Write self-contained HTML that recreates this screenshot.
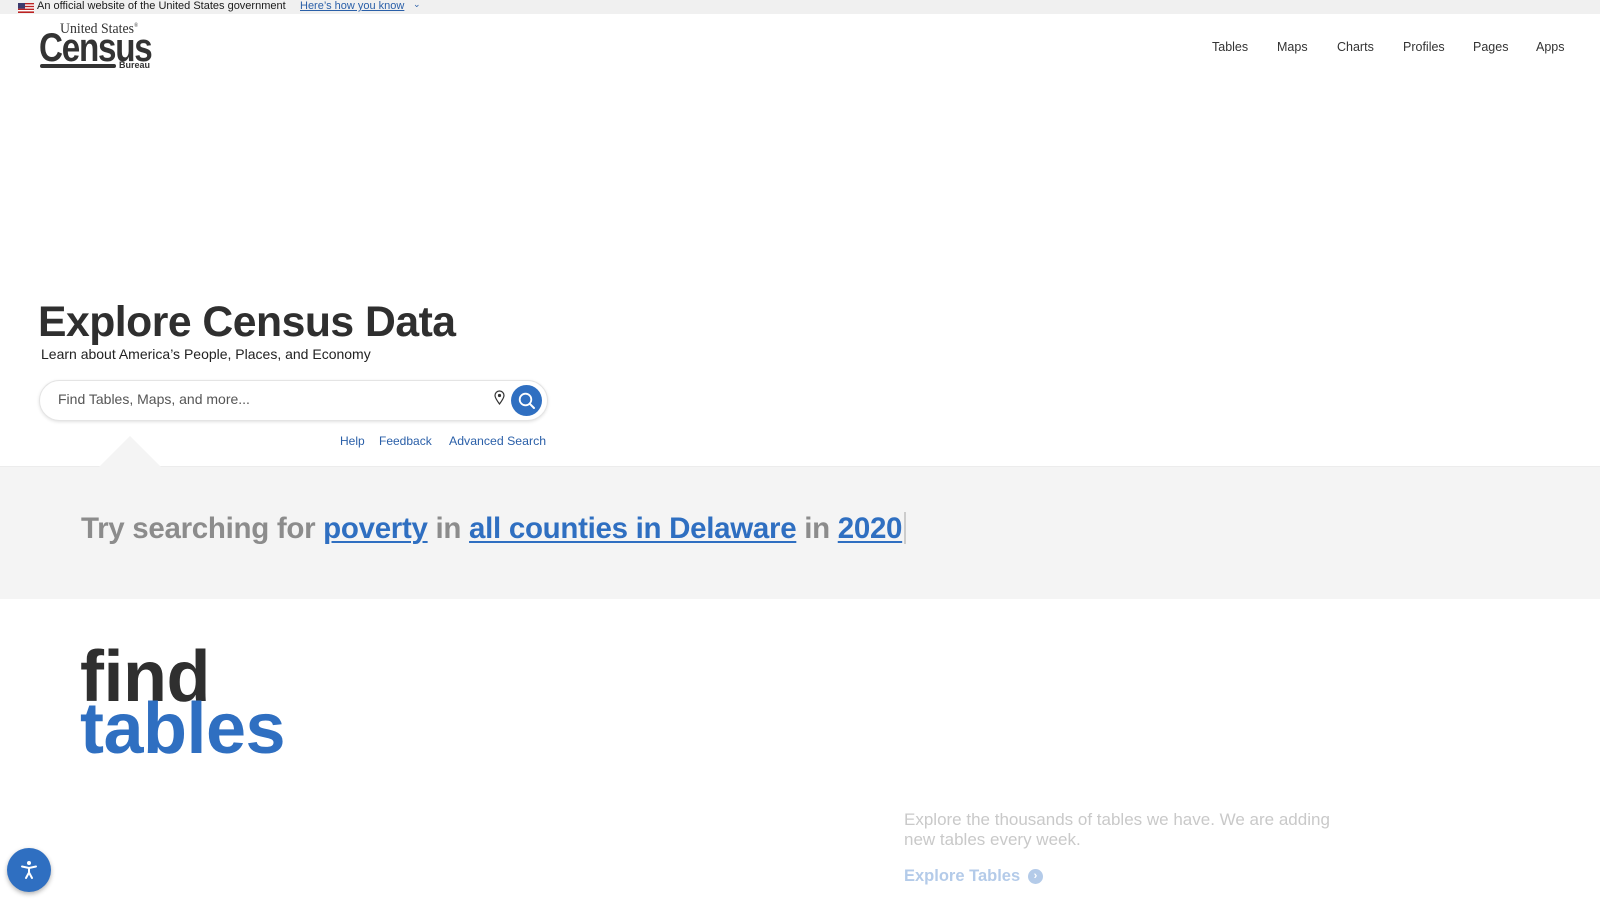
<!DOCTYPE html>
<html><head><meta charset="utf-8"><style>
*{margin:0;padding:0;box-sizing:border-box}
body{width:1600px;height:900px;overflow:hidden;background:#fff;font-family:"Liberation Sans",sans-serif;color:#333;position:relative}
.abs{position:absolute;white-space:nowrap}
.top{position:absolute;left:0;top:0;width:1600px;height:14px;background:#f0f0f0;font-size:11px;color:#1b1b1b}
.nav a{position:absolute;top:40px;font-size:12.5px;color:#333;text-decoration:none}
.band{position:absolute;left:0;top:466px;width:1600px;height:133px;background:#f4f4f4;border-top:1px solid #ececec}
.try{position:absolute;left:81px;top:512px;font-size:29.5px;font-weight:bold;color:#8c8c8c;letter-spacing:-0.3px}
.try u{color:#2f6fc1;text-decoration-thickness:2px;text-underline-offset:3px}
</style></head><body>
<div class="top"><svg class="abs" style="left:18px;top:3px" width="16" height="10"><rect width="16" height="10" fill="#b22"/><rect y="1.4" width="16" height="1.4" fill="#fff"/><rect y="4.2" width="16" height="1.4" fill="#fff"/><rect y="7" width="16" height="1.4" fill="#fff"/><rect width="7" height="5.6" fill="#3c3b6e"/></svg>
<span class="abs" style="left:37px;top:0">An official website of the United States government</span>
<span class="abs" style="left:300px;top:0;color:#2a5fa8;text-decoration:underline">Here’s how you know</span>
<span class="abs" style="left:413px;top:-1px;font-size:9px;color:#2a5fa8">⌄</span></div>

<div class="abs" style="left:60px;top:21px;font-family:'Liberation Serif',serif;font-size:15px;color:#333;transform:scaleX(0.92);transform-origin:left">United States<sup style="font-size:6px">®</sup></div>
<div class="abs" style="left:39px;top:28px;font-size:40px;font-weight:bold;color:#333;letter-spacing:-1.5px;line-height:40px;transform:scaleX(0.83);transform-origin:left">Census</div>
<div class="abs" style="left:40px;top:64px;width:76px;height:4px;background:#333;border-radius:2px"></div>
<div class="abs" style="left:119px;top:60px;font-size:9px;font-weight:bold;color:#333">Bureau</div>

<div class="nav"><a style="left:1212px">Tables</a><a style="left:1277px">Maps</a><a style="left:1337px">Charts</a><a style="left:1403px">Profiles</a><a style="left:1473px">Pages</a><a style="left:1536px">Apps</a></div>

<div class="abs" style="left:38px;top:298px;font-size:42.7px;font-weight:bold;color:#2f2f2f;letter-spacing:-0.5px">Explore Census Data</div>
<div class="abs" style="left:41px;top:346px;font-size:14px;color:#222">Learn about America’s People, Places, and Economy</div>

<div class="abs" style="left:39px;top:380px;width:509px;height:41px;border:1px solid #e4e4e4;border-radius:21px;box-shadow:0 1px 3px rgba(0,0,0,.12);background:#fff"></div>
<div class="abs" style="left:58px;top:391px;font-size:14px;color:#555">Find Tables, Maps, and more...</div>
<svg class="abs" style="left:494px;top:390px" width="11" height="15" viewBox="0 0 11 15"><path d="M5.5 14C2.5 10 1 7.5 1 5.5a4.5 4.5 0 0 1 9 0c0 2-1.5 4.5-4.5 8.5z" fill="none" stroke="#333" stroke-width="1.2"/><circle cx="5.5" cy="5.5" r="1.6" fill="#333"/></svg>
<div class="abs" style="left:511px;top:385px;width:31px;height:31px;border-radius:50%;background:#2f6fc1"></div>
<svg class="abs" style="left:517px;top:391px" width="20" height="20" viewBox="0 0 20 20"><circle cx="8.5" cy="8.5" r="5.8" fill="none" stroke="#fff" stroke-width="1.8"/><path d="M12.8 12.8L17 17" stroke="#fff" stroke-width="2" stroke-linecap="round"/></svg>
<div class="abs" style="left:340px;top:434px;font-size:12px;color:#2a5fa8">Help</div>
<div class="abs" style="left:379px;top:434px;font-size:12px;color:#2a5fa8">Feedback</div>
<div class="abs" style="left:449px;top:434px;font-size:12.3px;color:#2a5fa8">Advanced Search</div>

<div class="band"></div>
<div class="abs" style="left:99px;top:436px;width:0;height:0;border-left:31px solid transparent;border-right:31px solid transparent;border-bottom:31px solid #f4f4f4"></div>
<div class="try">Try searching for <u>poverty</u> in <u>all counties in Delaware</u> in <u>2020</u><span style="display:inline-block;width:2px;height:32px;background:#ccc;vertical-align:-6px;margin-left:2px"></span></div>

<div class="abs" style="left:80px;top:641px;font-size:72px;font-weight:bold;color:#2f2f2f;line-height:72px;letter-spacing:-0.5px">find</div>
<div class="abs" style="left:80px;top:693px;font-size:72px;font-weight:bold;color:#2f6fc1;line-height:72px;letter-spacing:-0.5px">tables</div>

<div class="abs" style="left:904px;top:810px;font-size:17px;color:#c9c9c9;line-height:20px">Explore the thousands of tables we have. We are adding<br>new tables every week.</div>
<div class="abs" style="left:904px;top:867px;font-size:16.5px;font-weight:bold;color:#b4cbe9">Explore Tables</div>
<div class="abs" style="left:1028px;top:869px;width:15px;height:15px;border-radius:50%;background:#b4cbe9;color:#fff;font-size:11px;text-align:center;line-height:15px;font-weight:bold">›</div>

<div class="abs" style="left:7px;top:848px;width:44px;height:44px;border-radius:50%;background:#2f6fc1;box-shadow:0 2px 5px rgba(0,0,0,.3)"></div>
<svg class="abs" style="left:18px;top:859px" width="22" height="22" viewBox="0 0 22 22"><circle cx="11" cy="4" r="2" fill="#fff"/><path d="M4 7.5L11 9l7-1.5M11 9v4.5M11 13.5L8 19M11 13.5L14 19" stroke="#fff" stroke-width="2" fill="none" stroke-linecap="round"/></svg>
</body></html>
